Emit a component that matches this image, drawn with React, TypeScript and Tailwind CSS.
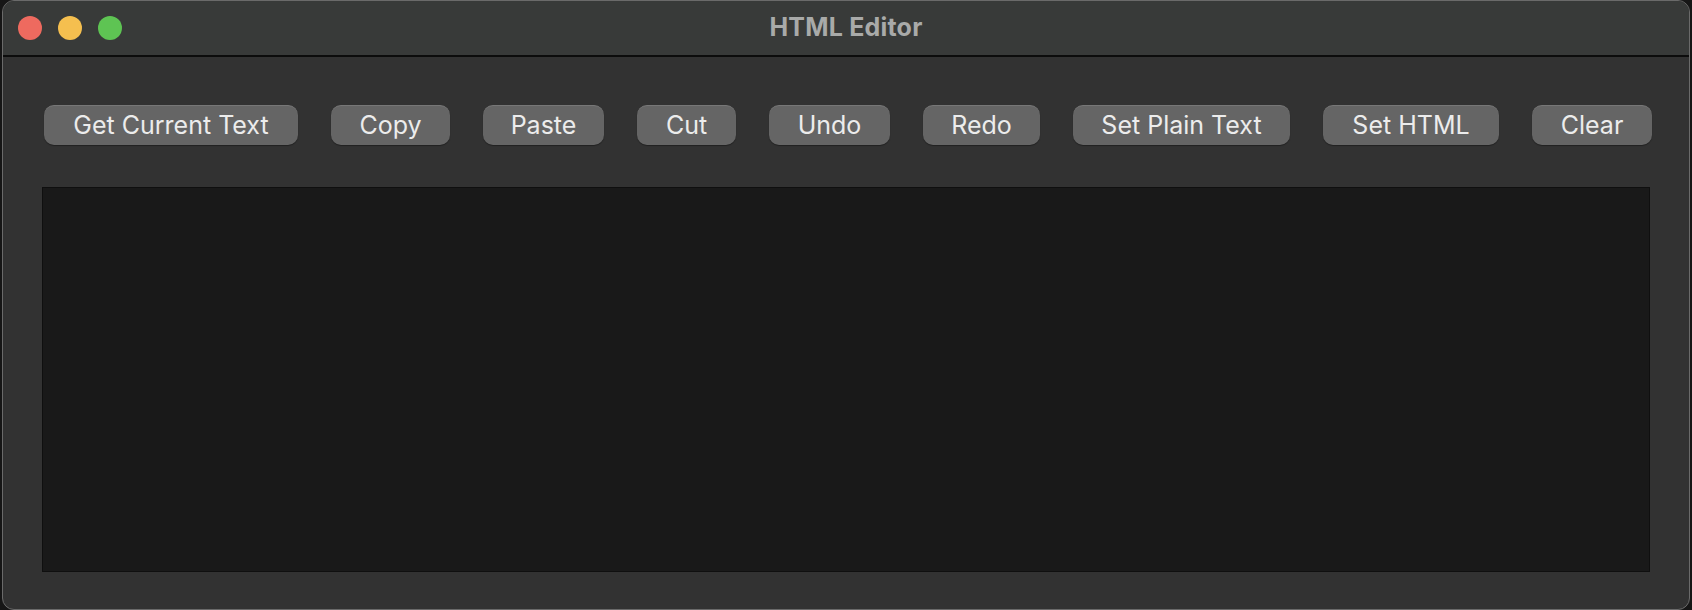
import React from 'react';

const BUTTONS: { label: string; width: string }[] = [
  { label: 'Get Current Text', width: 'w-[254px]' },
  { label: 'Copy', width: 'w-[119px]' },
  { label: 'Paste', width: 'w-[121px]' },
  { label: 'Cut', width: 'w-[99px]' },
  { label: 'Undo', width: 'w-[121px]' },
  { label: 'Redo', width: 'w-[117px]' },
  { label: 'Set Plain Text', width: 'w-[217px]' },
  { label: 'Set HTML', width: 'w-[176px]' },
  { label: 'Clear', width: 'w-[120px]' },
];

const App: React.FC = () => {
  return (
    <div className="w-[1692px] h-[610px] bg-[#161616] pl-[2px] font-['Inter',sans-serif]">
      <div className="w-[1688px] h-[610px] flex flex-col rounded-[12px] overflow-hidden border border-[#6a6a6a] bg-[#323232]">
        {/* Title bar */}
        <div className="relative h-[56px] shrink-0 bg-[#383a39] border-b-2 border-[#0c0c0c] flex items-center justify-center">
          <div className="absolute left-[15px] top-[15px] flex gap-[16px]">
            <span className="w-[24px] h-[24px] rounded-full bg-[#ee6a5f]" />
            <span className="w-[24px] h-[24px] rounded-full bg-[#f5bf4f]" />
            <span className="w-[24px] h-[24px] rounded-full bg-[#5ec453]" />
          </div>
          <span className="text-[25px] font-bold text-[#a9aaa9] tracking-[0.2px]">HTML Editor</span>
        </div>

        {/* Toolbar */}
        <div className="flex justify-between pl-[41px] pr-[37px] pt-[48px]">
          {BUTTONS.map((b) => (
            <button
              key={b.label}
              className={`${b.width} h-[40px] rounded-[10px] bg-[#656565] text-[#ececec] text-[25px] leading-none border-t border-[#777777] shadow-[0_1px_1px_rgba(0,0,0,0.35)]`}
            >
              {b.label}
            </button>
          ))}
        </div>

        {/* Editor area */}
        <div className="mx-[39px] mt-[42px] h-[385px] bg-[#191919] border border-[#0f0f0f]" />
      </div>
    </div>
  );
};

export default App;
